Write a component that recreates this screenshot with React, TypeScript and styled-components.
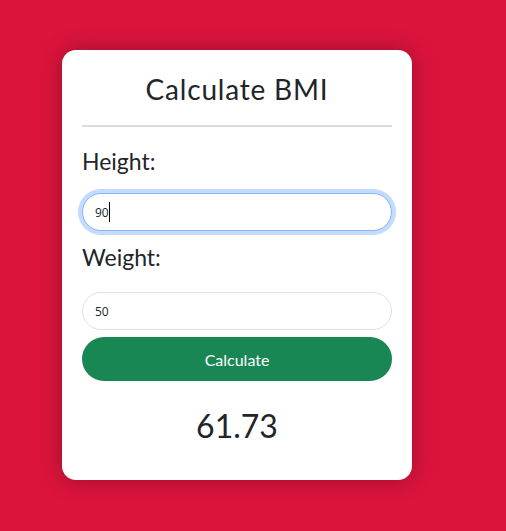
import React, { useEffect, useRef } from "react";
import styled, { createGlobalStyle } from "styled-components";

const Global = createGlobalStyle`
  html, body { margin: 0; padding: 0; }
  body {
    background: #dc143c;
    font-family: Lato, "Noto Sans", sans-serif;
    min-height: 531px;
  }
`;

const Page = styled.div`
  padding: 50px 0 0 62px;
`;

const Card = styled.div`
  width: 350px;
  box-sizing: border-box;
  background: #fff;
  border-radius: 14px;
  padding: 20px 20px 34px;
  box-shadow: 0 0 22px rgba(0, 0, 0, 0.3);
  display: flex;
  flex-direction: column;
`;

const Title = styled.h1`
  margin: 0;
  font-size: 28px;
  font-weight: 400;
  letter-spacing: 0.8px;
  color: #212529;
  text-align: center;
  line-height: 38px;
  padding-bottom: 17px;
  border-bottom: 2px solid #dcdcdc;
`;

const Label = styled.label<{ $top: number; $bottom: number }>`
  font-size: 23px;
  color: #212529;
  line-height: 28px;
  margin: ${(p) => p.$top}px 0 ${(p) => p.$bottom}px;
`;

const Field = styled.div`
  position: relative;
  display: flex;
  flex-direction: column;
`;

const Input = styled.input<{ $focus?: boolean }>`
  height: 38px;
  box-sizing: border-box;
  border-radius: 19px;
  border: 1px solid ${(p) => (p.$focus ? "#86b7fe" : "#dee2e6")};
  box-shadow: ${(p) => (p.$focus ? "0 0 0 4px rgba(13,110,253,0.25)" : "none")};
  padding: 0 12px;
  font-family: "Open Sans", sans-serif;
  font-size: 12px;
  color: #212529;
  outline: none;
  caret-color: transparent;
`;

const Caret = styled.span`
  position: absolute;
  left: 27px;
  top: 9px;
  width: 1px;
  height: 20px;
  background: #000;
`;

const Button = styled.button`
  margin-top: 7px;
  height: 44px;
  border: none;
  border-radius: 22px;
  background: #198754;
  color: #fff;
  font-family: Lato, sans-serif;
  font-size: 16px;
`;

const Result = styled.div`
  margin-top: 25px;
  text-align: center;
  font-size: 32px;
  color: #212529;
  line-height: 40px;
`;

export default function App() {
  const ref = useRef<HTMLInputElement>(null);
  useEffect(() => {
    const el = ref.current;
    if (el) {
      el.focus();
      el.setSelectionRange(2, 2);
    }
  }, []);
  return (
    <Page>
      <Global />
      <Card>
        <Title>Calculate BMI</Title>
        <Label $top={20} $bottom={18}>Height:</Label>
        <Field>
          <Input ref={ref} $focus defaultValue="90" />
          <Caret />
        </Field>
        <Label $top={12} $bottom={21}>Weight:</Label>
        <Input defaultValue="50" />
        <Button>Calculate</Button>
        <Result>61.73</Result>
      </Card>
    </Page>
  );
}
